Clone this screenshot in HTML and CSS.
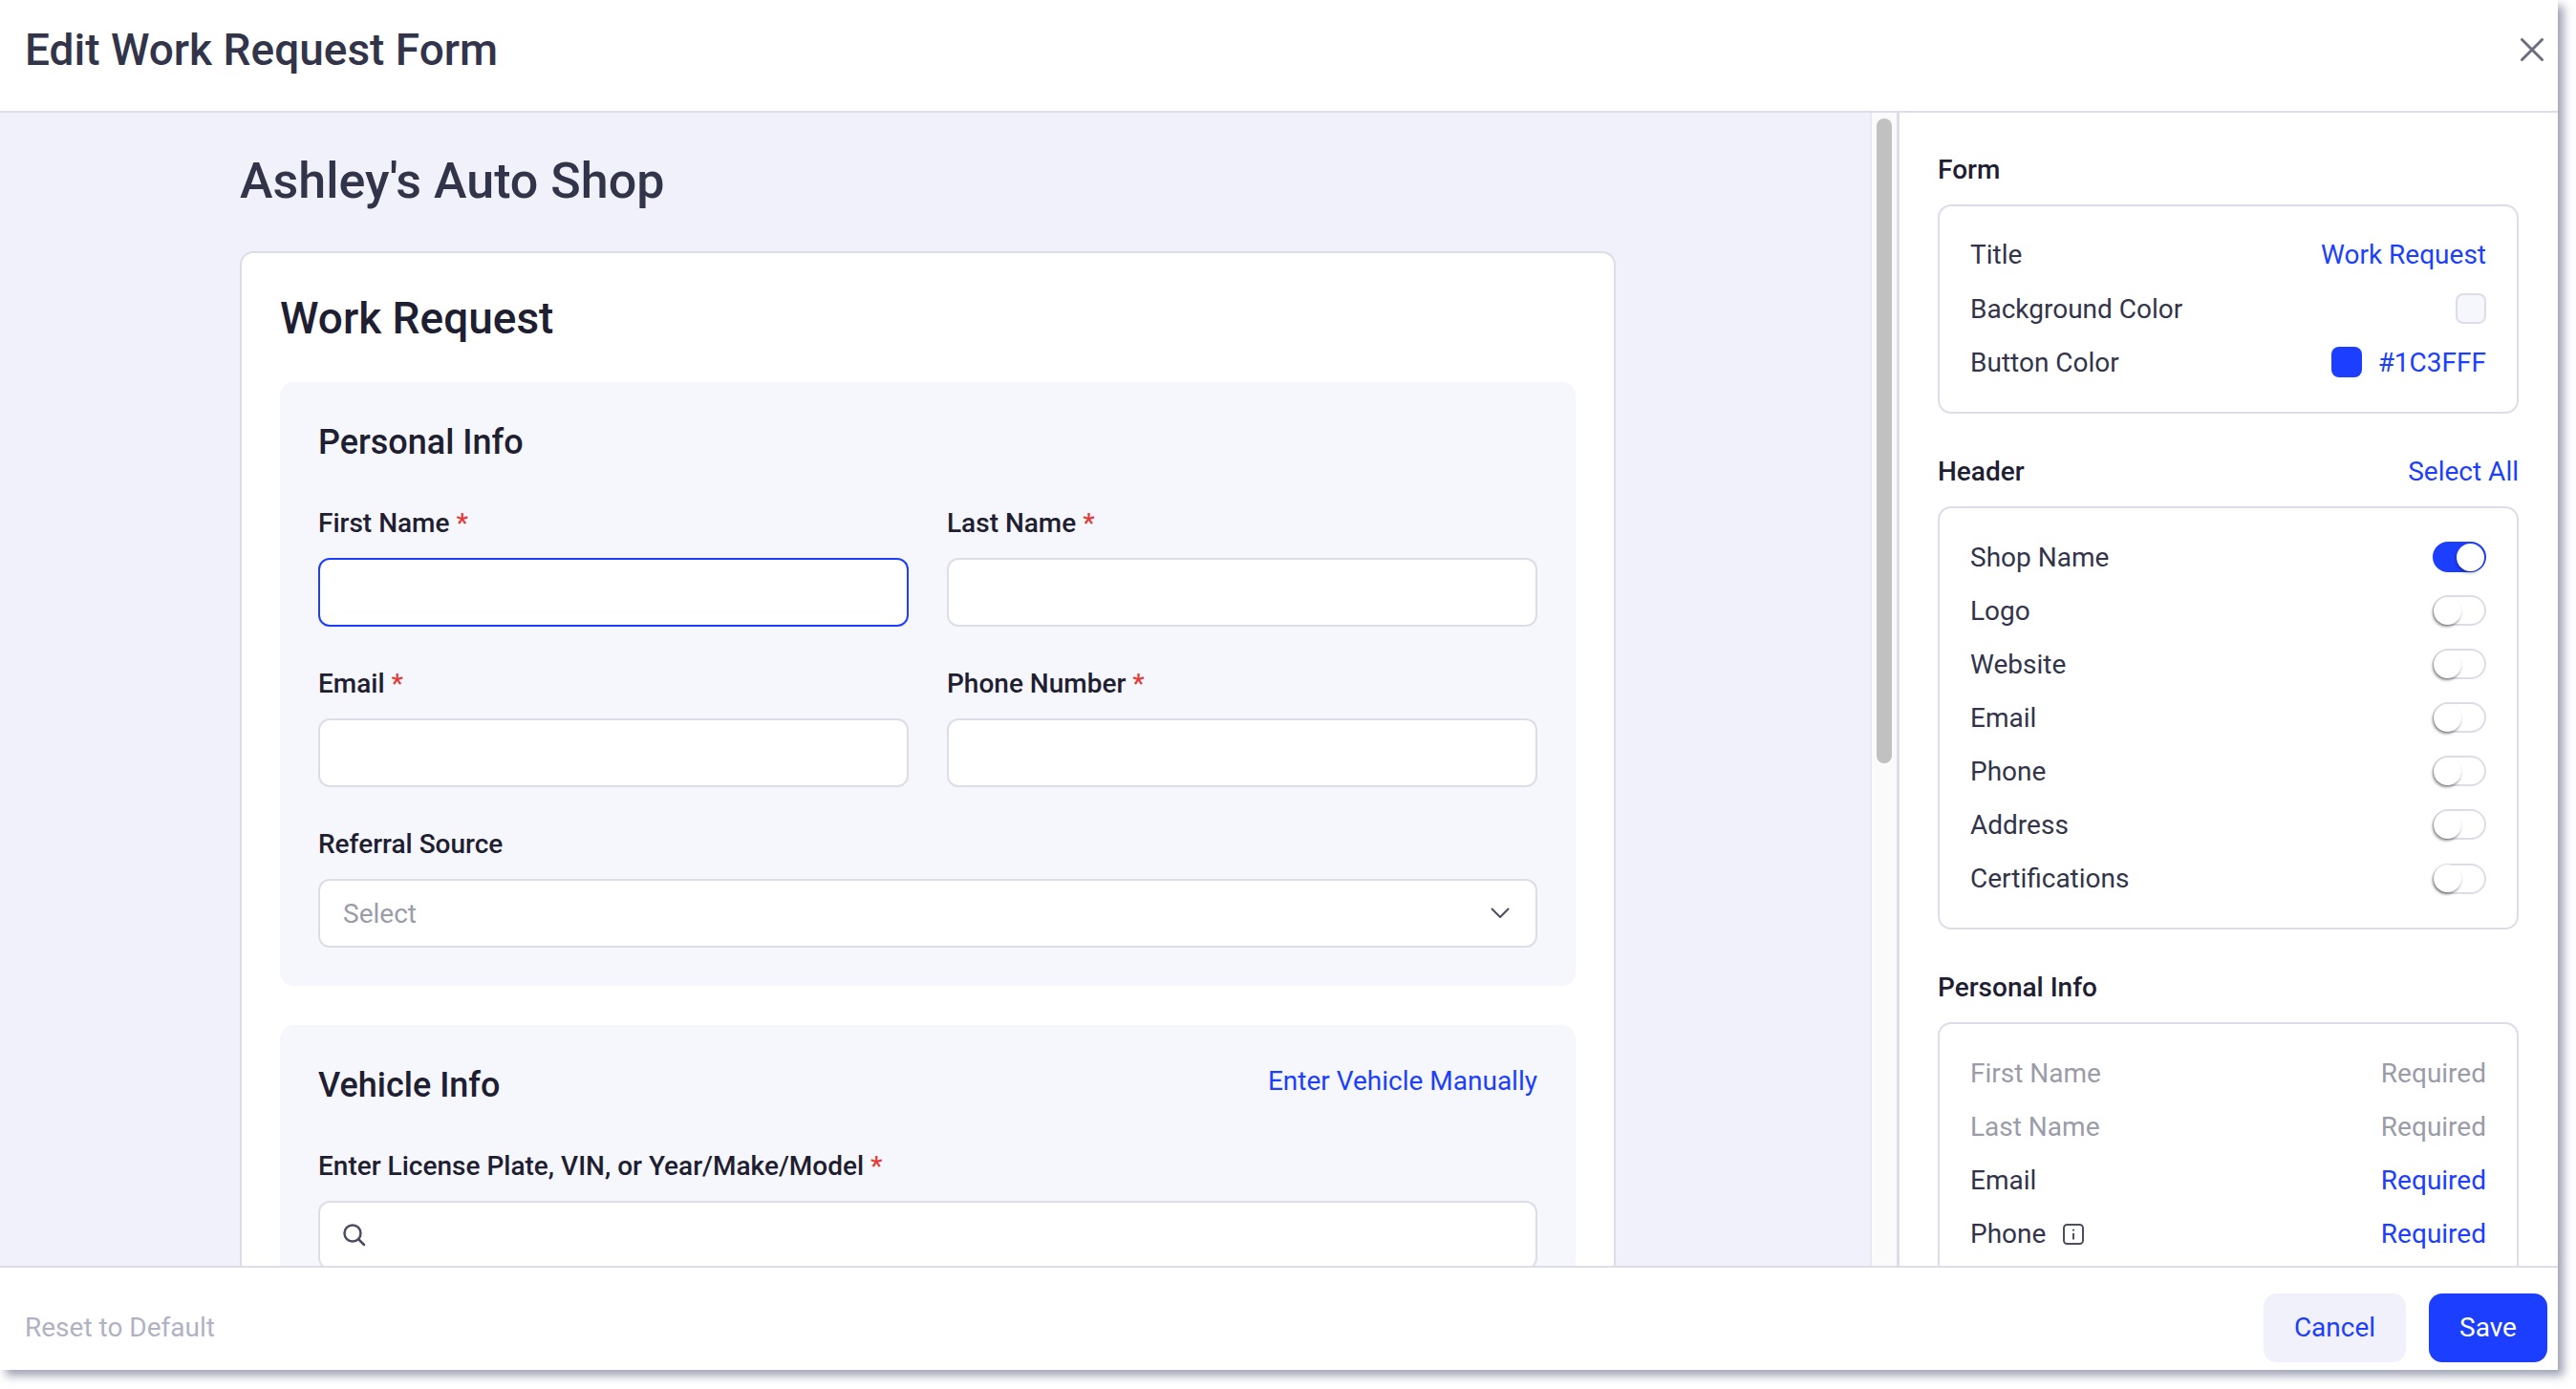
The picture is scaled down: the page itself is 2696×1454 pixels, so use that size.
FILE: index.html
```html
<!DOCTYPE html>
<html lang="en">
<head>
<meta charset="utf-8">
<title>Edit Work Request Form</title>
<link rel="stylesheet" href="styles.css">
</head>
<body>
<div class="modal">
  <header class="modal-head">
    <h1 class="modal-title">Edit Work Request Form</h1>
    <svg class="close" viewBox="0 0 24 24" fill="none"><path d="M1.5 1.5L22.5 22.5M22.5 1.5L1.5 22.5"/></svg>
  </header>
  <div class="modal-body">
    <main class="preview">
      <h2 class="shop">Ashley's Auto Shop</h2>
      <section class="card">
        <h3 class="card-title">Work Request</h3>
        <div class="group">
          <div class="group-head"><h4 class="group-title">Personal Info</h4></div>
          <div class="fields">
            <div class="field">
              <div class="label">First Name <span class="req">*</span></div>
              <div class="input focus"></div>
            </div>
            <div class="field">
              <div class="label">Last Name <span class="req">*</span></div>
              <div class="input"></div>
            </div>
            <div class="field">
              <div class="label">Email <span class="req">*</span></div>
              <div class="input"></div>
            </div>
            <div class="field">
              <div class="label">Phone Number <span class="req">*</span></div>
              <div class="input"></div>
            </div>
            <div class="field wide">
              <div class="label">Referral Source</div>
              <div class="input select">
                <span class="placeholder">Select</span>
                <svg class="chev" viewBox="0 0 20 12" fill="none"><path d="M1.5 1.5L10 10L18.5 1.5"/></svg>
              </div>
            </div>
          </div>
        </div>
        <div class="group">
          <div class="group-head">
            <h4 class="group-title">Vehicle Info</h4>
            <a class="link vehicle-link">Enter Vehicle Manually</a>
          </div>
          <div class="field">
            <div class="label">Enter License Plate, VIN, or Year/Make/Model <span class="req">*</span></div>
            <div class="input search">
              <svg class="search-icon" viewBox="0 0 24 24" fill="none"><circle cx="10" cy="10" r="8.5"/><path d="M16.5 16.5L22 22"/></svg>
            </div>
          </div>
        </div>
      </section>
    </main>
    <div class="track"><div class="thumb"></div></div>
    <aside class="side">
      <div class="side-head"><span>Form</span></div>
      <div class="box">
        <div class="row"><span>Title</span><span class="link">Work Request</span></div>
        <div class="row"><span>Background Color</span><span class="swatch light"></span></div>
        <div class="row"><span>Button Color</span><span class="color-val"><span class="swatch blue"></span><span class="link">#1C3FFF</span></span></div>
      </div>
      <div class="side-head spaced"><span>Header</span><span class="link regular">Select All</span></div>
      <div class="box">
        <div class="row"><span>Shop Name</span><span class="toggle on"><span class="knob"></span></span></div>
        <div class="row"><span>Logo</span><span class="toggle"><span class="knob"></span></span></div>
        <div class="row"><span>Website</span><span class="toggle"><span class="knob"></span></span></div>
        <div class="row"><span>Email</span><span class="toggle"><span class="knob"></span></span></div>
        <div class="row"><span>Phone</span><span class="toggle"><span class="knob"></span></span></div>
        <div class="row"><span>Address</span><span class="toggle"><span class="knob"></span></span></div>
        <div class="row"><span>Certifications</span><span class="toggle"><span class="knob"></span></span></div>
      </div>
      <div class="side-head spaced"><span>Personal Info</span></div>
      <div class="box">
        <div class="row muted"><span>First Name</span><span>Required</span></div>
        <div class="row muted"><span>Last Name</span><span>Required</span></div>
        <div class="row"><span>Email</span><span class="link">Required</span></div>
        <div class="row"><span class="with-icon">Phone
          <svg class="info" viewBox="0 0 22 22" fill="none"><rect x="1" y="1" width="20" height="20" rx="3.5"/><path d="M11 10V16.5"/><path class="dot" d="M11 5.8V7.4"/></svg></span><span class="link">Required</span></div>
      </div>
    </aside>
  </div>
  <footer class="modal-foot">
    <span class="reset">Reset to Default</span>
    <div class="actions">
      <button class="btn cancel">Cancel</button>
      <button class="btn save">Save</button>
    </div>
  </footer>
</div>
</body>
</html>
```
FILE: styles.css
```css
* { box-sizing: border-box; }
html, body { margin: 0; padding: 0; background: #fff; }
body { width: 2696px; height: 1454px; overflow: hidden; font-family: Roboto, "Liberation Sans", sans-serif; color: #32344a; }
h1, h2, h3, h4 { margin: 0; font-weight: 500; }

.modal { width: 2677px; height: 1434px; display: flex; flex-direction: column; background: #fff; box-shadow: 6px 6px 9px rgba(95, 100, 130, .6); position: relative; }
.modal-head { height: 118px; flex: none; display: flex; align-items: center; justify-content: space-between; padding: 0 15px 12px 26px; border-bottom: 2px solid #dcdde8; }
.modal-title { font-size: 46px; line-height: 56px; color: #32344a; }
.close { width: 24px; height: 24px; }
.close path { stroke: #6b6d80; stroke-width: 3; stroke-linecap: round; }

.modal-body { flex: 1; min-height: 0; display: flex; overflow: hidden; }
.preview { width: 1957px; flex: none; background: #f0f1fa; padding: 42px 0 0 251px; overflow: hidden; }
.shop { font-size: 52px; line-height: 60px; color: #32344a; margin-bottom: 43px; }
.card { width: 1440px; background: #fff; border: 2px solid #dcdde8; border-radius: 14px; padding: 40px 40px 40px; }
.card-title { font-size: 46px; line-height: 56px; color: #1e2032; margin-bottom: 39px; }
.group { background: #f6f7fc; border-radius: 14px; padding: 40px; }
.group + .group { margin-top: 41px; }
.group-head { height: 46px; margin-bottom: 45px; display: flex; align-items: center; justify-content: space-between; }
.group-title { font-size: 36px; line-height: 46px; color: #1e2032; }
.vehicle-link { position: relative; top: -5px; }
.fields { display: grid; grid-template-columns: 1fr 1fr; column-gap: 40px; row-gap: 43px; }
.wide { grid-column: 1 / -1; }
.label { height: 32px; line-height: 34px; font-size: 28px; font-weight: 500; color: #1e2032; margin-bottom: 21px; white-space: nowrap; }
.req { color: #e53935; }
.input { height: 72px; background: #fff; border: 2px solid #dcdde8; border-radius: 12px; display: flex; align-items: center; }
.input.focus { border-color: #1c3fff; }
.select { justify-content: space-between; padding: 0 27px 0 24px; }
.placeholder { font-size: 28px; color: #9a9ca9; }
.chev { width: 20px; height: 12px; }
.chev path { stroke: #4b4d62; stroke-width: 2; stroke-linecap: round; stroke-linejoin: round; }
.search { padding-left: 24px; }
.search-icon { width: 24px; height: 24px; }
.search-icon circle, .search-icon path { stroke: #4b4d62; stroke-width: 2.5; stroke-linecap: round; }

.track { width: 31px; flex: none; background: #fafafa; border-left: 2px solid #e8e9f0; border-right: 3px solid #dcdde8; padding: 6px 5px 0 5px; }
.thumb { height: 675px; background: #c1c1c1; border-radius: 8px; }

.side { flex: 1; min-width: 0; padding: 39px 41px 0 40px; overflow: hidden; font-size: 28px; }
.side-head { height: 40px; display: flex; align-items: center; justify-content: space-between; font-weight: 500; color: #1e2032; margin-bottom: 16.5px; }
.side-head.spaced { margin-top: 40.5px; }
.box { border: 2px solid #dcdde8; border-radius: 14px; padding: 23.4px 32px; flex: none; }
.row { height: 56.1px; display: flex; align-items: center; justify-content: space-between; color: #32344a; }
.row.muted { color: #9a9ca9; }
.link { color: #1c3fff; font-size: 28px; font-weight: 400; }
.swatch { width: 32px; height: 32px; border-radius: 8px; display: block; flex: none; }
.swatch.light { background: #f6f7fc; border: 2px solid #dcdde8; }
.swatch.blue { background: #1c3fff; }
.color-val { display: flex; align-items: center; gap: 17px; }
.toggle { width: 56px; height: 32px; border: 2px solid #dcdde8; border-radius: 16px; display: flex; align-items: center; background: #fff; }
.knob { width: 29px; height: 29px; border-radius: 50%; background: #fff; box-shadow: -1px 2px 3px rgba(0, 0, 0, .45); margin-left: -1px; }
.toggle.on { background: #1c3fff; border-color: #1c3fff; justify-content: flex-end; }
.toggle.on .knob { margin: 0; box-shadow: -1px 2px 3px rgba(0, 0, 40, .3); }
.with-icon { display: flex; align-items: center; gap: 18px; }
.info { width: 22px; height: 22px; }
.info rect, .info path { stroke: #4b4d62; stroke-width: 2; }

.modal-foot { flex: none; height: 109px; border-top: 2px solid #dcdde8; background: #fff; display: flex; align-items: center; justify-content: space-between; padding: 18px 11px 0 26px; position: relative; }
.reset { font-size: 28px; color: #b0b2c4; }
.actions { display: flex; gap: 24px; }
.btn { height: 72px; border: 0; border-radius: 14px; font-family: inherit; font-size: 28px; padding: 0; }
.cancel { width: 149px; background: #f0f1fa; color: #1c3fff; }
.save { width: 124px; background: #1c3fff; color: #fff; }
```
